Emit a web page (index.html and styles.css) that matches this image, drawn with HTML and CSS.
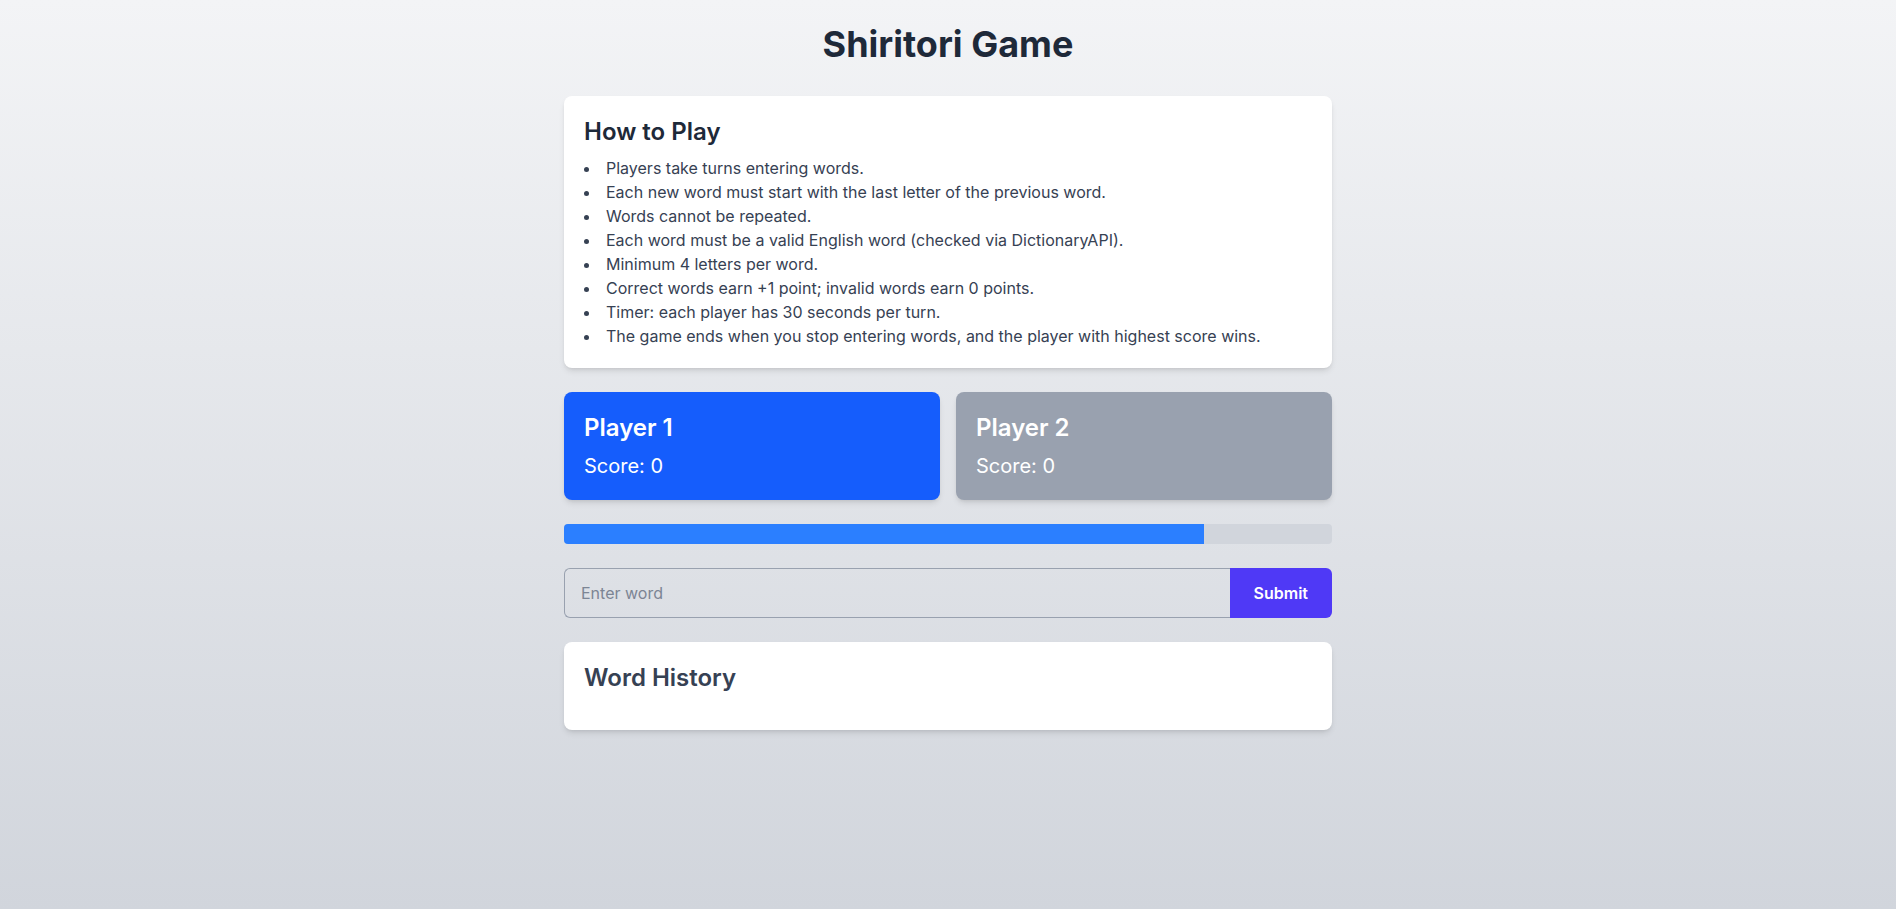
FILE: index.html
```html
<!DOCTYPE html>
<html lang="en">
<head>
<meta charset="utf-8">
<title>Shiritori Game</title>
<link rel="stylesheet" href="styles.css">
</head>
<body>
<main class="page">
  <div class="container">
    <h1 class="title">Shiritori Game</h1>

    <section class="card rules">
      <h2 class="card-heading">How to Play</h2>
      <ul class="rules-list">
        <li>Players take turns entering words.</li>
        <li>Each new word must start with the last letter of the previous word.</li>
        <li>Words cannot be repeated.</li>
        <li>Each word must be a valid English word (checked via DictionaryAPI).</li>
        <li>Minimum 4 letters per word.</li>
        <li>Correct words earn +1 point; invalid words earn 0 points.</li>
        <li>Timer: each player has 30 seconds per turn.</li>
        <li>The game ends when you stop entering words, and the player with highest score wins.</li>
      </ul>
    </section>

    <section class="players">
      <div class="player player-active">
        <h2 class="player-name">Player 1</h2>
        <p class="player-score">Score: 0</p>
      </div>
      <div class="player player-idle">
        <h2 class="player-name">Player 2</h2>
        <p class="player-score">Score: 0</p>
      </div>
    </section>

    <div class="timer">
      <div class="timer-fill" style="width: 83.333%"></div>
    </div>

    <form class="word-form" onsubmit="return false;">
      <input class="word-input" type="text" placeholder="Enter word">
      <button class="word-submit" type="submit">Submit</button>
    </form>

    <section class="card history">
      <h2 class="card-heading history-heading">Word History</h2>
      <ul class="history-list"></ul>
    </section>
  </div>
</main>
</body>
</html>
```

FILE: styles.css
```css
* {
  box-sizing: border-box;
}

html, body {
  margin: 0;
  padding: 0;
}

body {
  font-family: Inter, "Noto Sans", "Liberation Sans", sans-serif;
  color: #1e2939;
}

.page {
  min-height: 100vh;
  padding: 24px;
  background: linear-gradient(to bottom, #f3f4f6, #d1d5dc);
}

.container {
  max-width: 768px;
  margin: 0 auto;
  display: flex;
  flex-direction: column;
}

.title {
  margin: 0 0 32px;
  font-size: 36px;
  line-height: 40px;
  font-weight: 700;
  text-align: center;
  color: #1e2939;
}

.card {
  background: #ffffff;
  border-radius: 8px;
  padding: 20px;
  box-shadow: 0 4px 6px -1px rgba(0, 0, 0, 0.1), 0 2px 4px -2px rgba(0, 0, 0, 0.1);
  margin-bottom: 24px;
}

.card-heading {
  margin: 0 0 8px;
  font-size: 24px;
  line-height: 32px;
  font-weight: 600;
  color: #1e2939;
}

.rules-list {
  margin: 0;
  padding: 0;
  list-style: disc inside;
  font-size: 16px;
  line-height: 24px;
  color: #364153;
}

.players {
  display: grid;
  grid-template-columns: 1fr 1fr;
  gap: 16px;
  margin-bottom: 24px;
}

.player {
  border-radius: 8px;
  padding: 20px;
  color: #ffffff;
  box-shadow: 0 4px 6px -1px rgba(0, 0, 0, 0.1), 0 2px 4px -2px rgba(0, 0, 0, 0.1);
}

.player-active {
  background: #155dfc;
}

.player-idle {
  background: #99a1af;
}

.player-name {
  margin: 0 0 8px;
  font-size: 24px;
  line-height: 32px;
  font-weight: 600;
}

.player-score {
  margin: 0;
  font-size: 20px;
  line-height: 28px;
}

.timer {
  height: 20px;
  border-radius: 4px;
  background: #d1d5dc;
  overflow: hidden;
  margin-bottom: 24px;
}

.timer-fill {
  height: 100%;
  background: #2b7fff;
}

.word-form {
  display: flex;
  margin: 0 0 24px;
}

.word-input {
  flex: 1;
  min-width: 0;
  height: 50px;
  padding: 12px 16px;
  font-family: inherit;
  font-size: 16px;
  line-height: 24px;
  color: #1e2939;
  background: transparent;
  border: 1px solid #99a1af;
  border-right: none;
  border-radius: 6px 0 0 6px;
  outline: none;
}

.word-input::placeholder {
  color: #7c8594;
}

.word-submit {
  height: 50px;
  padding: 0 24px;
  font-family: inherit;
  font-size: 16px;
  font-weight: 600;
  color: #ffffff;
  background: #4f39f6;
  border: none;
  border-radius: 0 6px 6px 0;
  cursor: pointer;
}

.history-heading {
  color: #364153;
  margin-bottom: 16px;
}

.history-list {
  margin: 0;
  padding: 0;
  list-style: none;
}
```
